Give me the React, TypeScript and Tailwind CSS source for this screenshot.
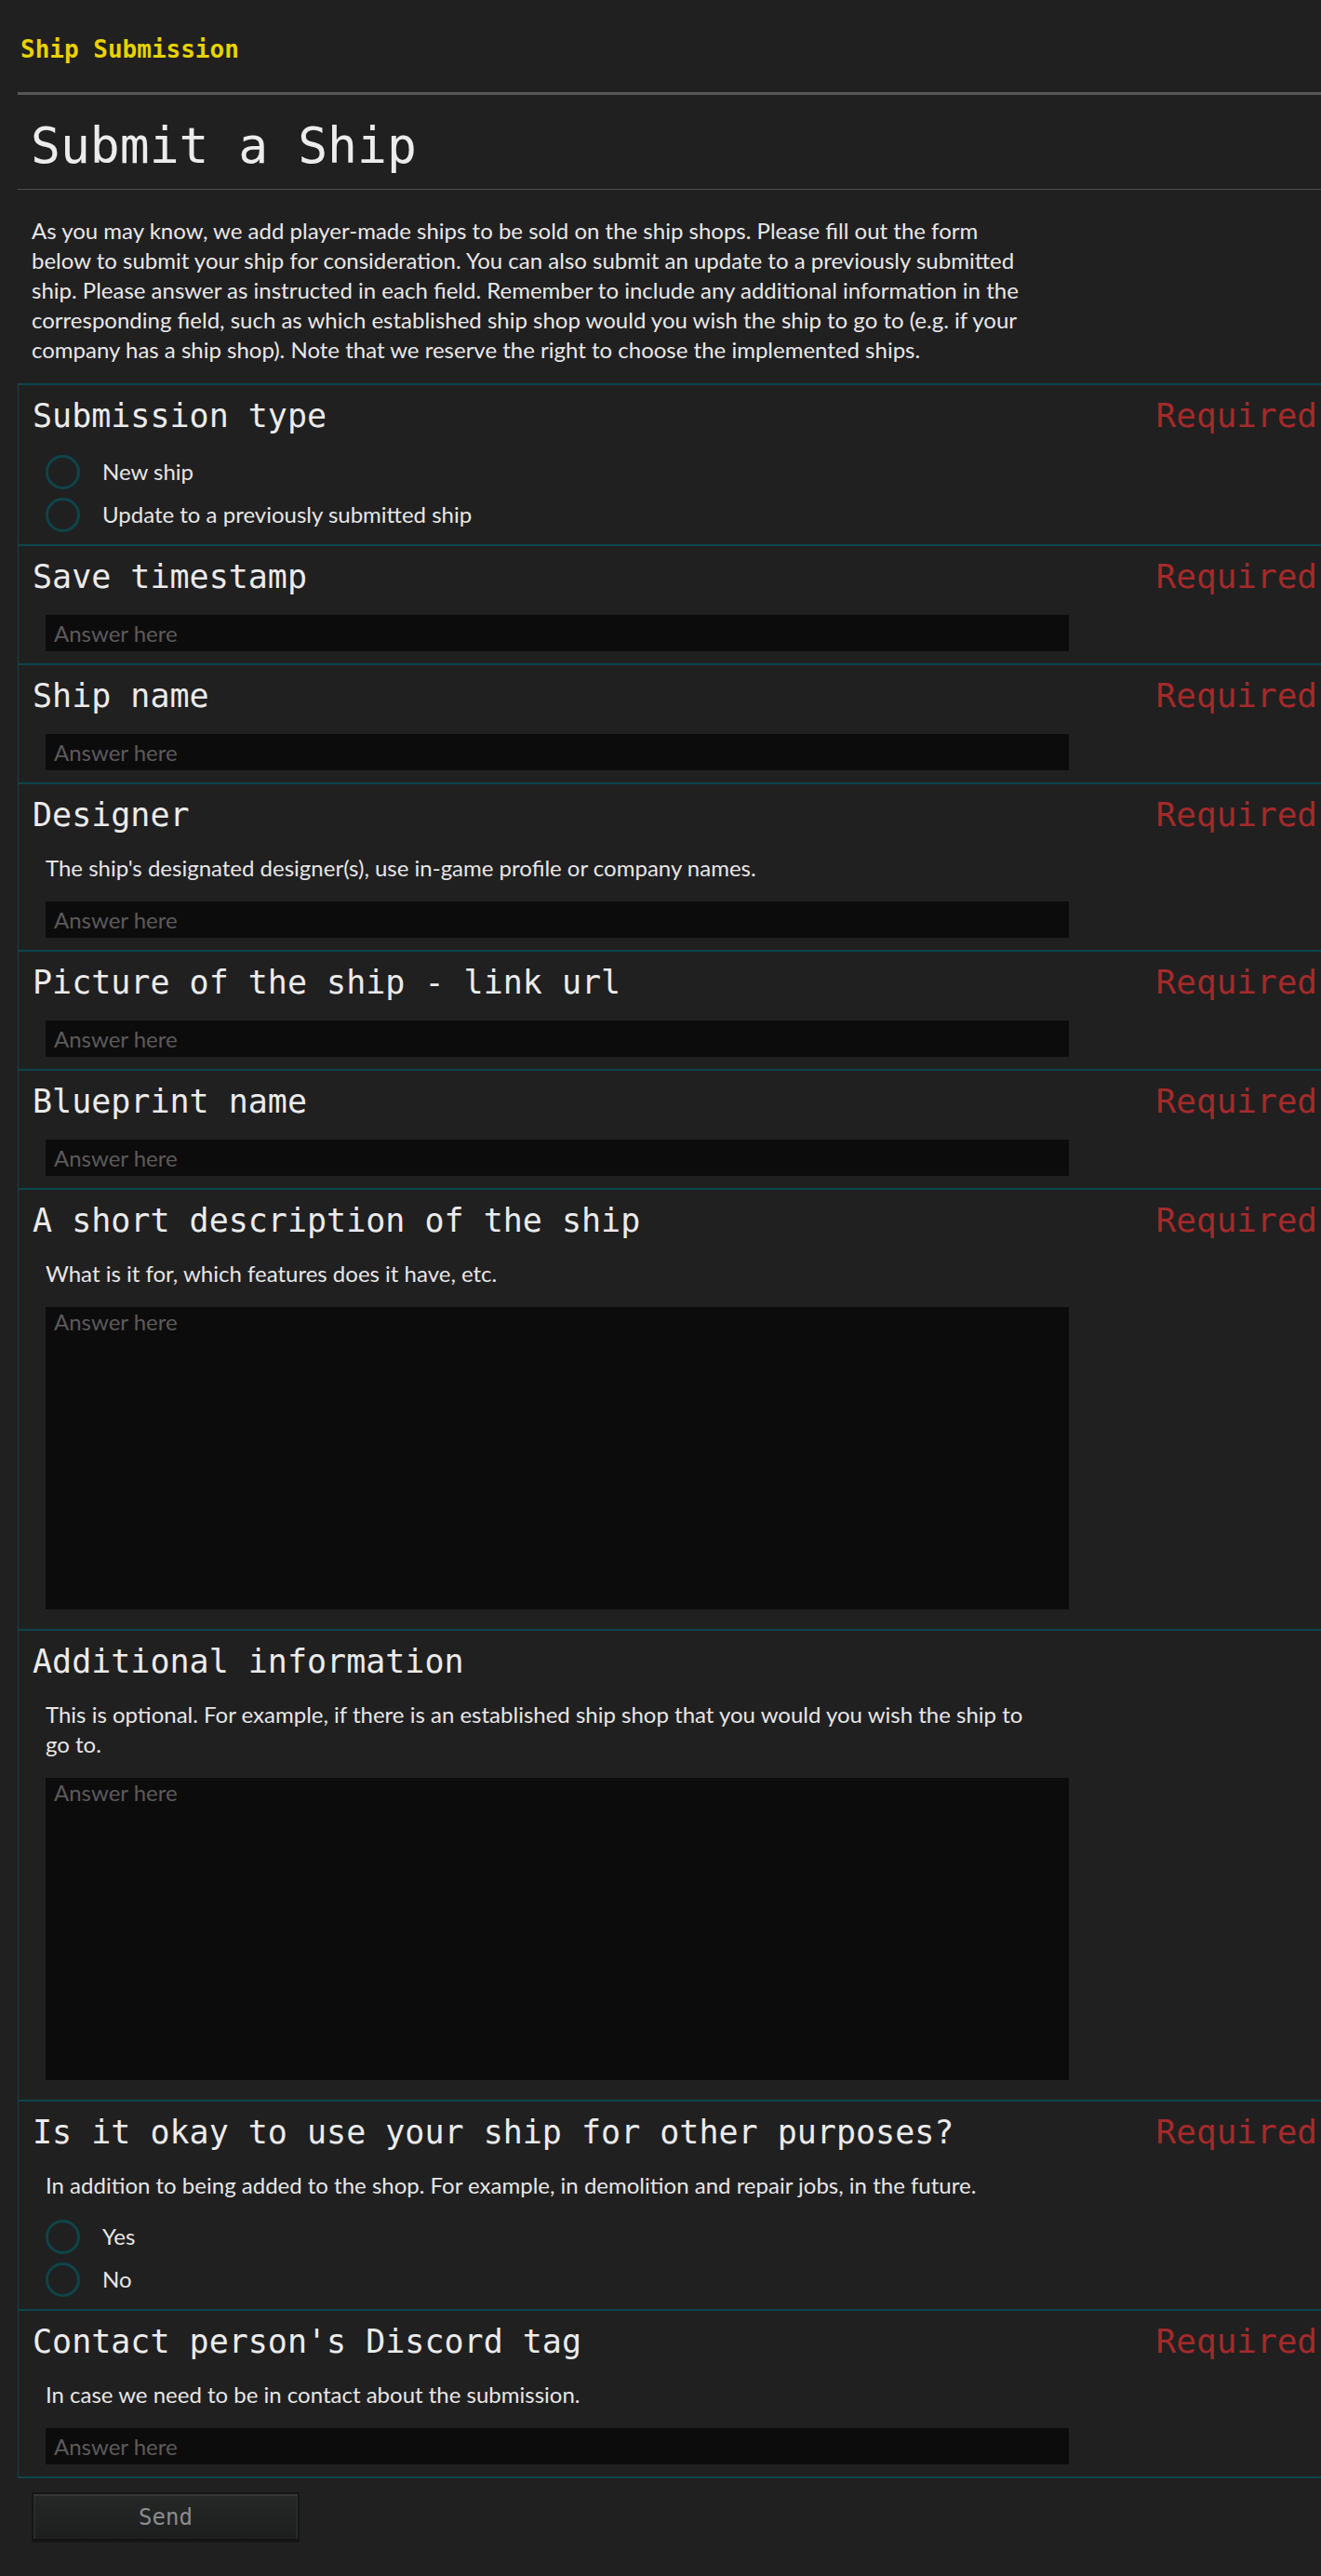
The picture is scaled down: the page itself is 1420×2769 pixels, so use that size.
import React from 'react'

type Field = {
  title: string
  required: boolean
  desc?: string
  kind: 'input' | 'textarea' | 'radio'
  options?: string[]
}

const fields: Field[] = [
  { title: 'Submission type', required: true, kind: 'radio', options: ['New ship', 'Update to a previously submitted ship'] },
  { title: 'Save timestamp', required: true, kind: 'input' },
  { title: 'Ship name', required: true, kind: 'input' },
  { title: 'Designer', required: true, kind: 'input', desc: "The ship's designated designer(s), use in-game profile or company names." },
  { title: 'Picture of the ship - link url', required: true, kind: 'input' },
  { title: 'Blueprint name', required: true, kind: 'input' },
  { title: 'A short description of the ship', required: true, kind: 'textarea', desc: 'What is it for, which features does it have, etc.' },
  {
    title: 'Additional information',
    required: false,
    kind: 'textarea',
    desc: 'This is optional. For example, if there is an established ship shop that you would you wish the ship to go to.'
  },
  {
    title: 'Is it okay to use your ship for other purposes?',
    required: true,
    kind: 'radio',
    options: ['Yes', 'No'],
    desc: 'In addition to being added to the shop. For example, in demolition and repair jobs, in the future.'
  },
  { title: "Contact person's Discord tag", required: true, kind: 'input', desc: 'In case we need to be in contact about the submission.' }
]

function FieldBlock({ field, last }: { field: Field; last: boolean }) {
  return (
    <div
      className={`border-t-2 border-[#0b464b] pt-3 ${last ? 'border-b-2' : ''} ${field.kind === 'textarea' ? 'pb-[21px]' : 'pb-[13px]'}`}
    >
      {/* Header row */}
      <div className="flex justify-between items-start pl-[15px] pr-[4px]">
        <span className="font-['DejaVu_Sans_Mono',monospace] text-[35px] leading-[42px] text-[#ebebeb]">{field.title}</span>
        {field.required && (
          <span className="font-['DejaVu_Sans_Mono',monospace] text-[36px] leading-[42px] text-[#a52a2a]">Required</span>
        )}
      </div>

      <div className="pl-[29px] flex flex-col gap-5 mt-5">
        {field.desc && <p className="max-w-[1068px] text-[24px] leading-[32px] text-[#e6e6e6]">{field.desc}</p>}

        {field.kind === 'input' && (
          <input
            type="text"
            placeholder="Answer here"
            className="block w-[1100px] h-[39px] bg-[#0d0c0d] px-[9px] text-[24px] text-[#e6e6e6] placeholder-[#5b5a5b] outline-none"
          />
        )}

        {field.kind === 'textarea' && (
          <textarea
            placeholder="Answer here"
            className="block w-[1100px] h-[325px] bg-[#0d0c0d] px-[9px] pt-[2px] text-[24px] leading-[28px] text-[#e6e6e6] placeholder-[#5b5a5b] outline-none resize-none"
          />
        )}

        {field.kind === 'radio' && (
          <div className="flex flex-col gap-2">
            {field.options?.map((opt) => (
              <label key={opt} className="flex items-center h-[38px] gap-6 cursor-pointer">
                <span className="w-[37px] h-[37px] rounded-full border-[3px] border-[#0c4549] shrink-0" />
                <span className="text-[24px] text-[#e6e6e6]">{opt}</span>
              </label>
            ))}
          </div>
        )}
      </div>
    </div>
  )
}

export default function App() {
  return (
    <div className="min-h-screen bg-[#212021] font-['Lato','Noto_Sans',sans-serif] pb-[38px]">
      {/* Top nav */}
      <div className="h-[99px] pt-[36px] pl-[22px]">
        <span className="font-['DejaVu_Sans_Mono',monospace] font-bold text-[26px] leading-[34px] text-[#e8d200]">
          Ship Submission
        </span>
      </div>

      <div className="ml-[19px]">
        <div className="border-t-[3px] border-[#565656]">
          <h1 className="pl-[14px] pt-[25px] pb-[16px] font-['DejaVu_Sans_Mono',monospace] text-[53px] leading-[60px] text-[#ececec]">
            Submit a Ship
          </h1>
        </div>
        <div className="border-t border-[#4d4d4d]" />

        <p className="mt-[28px] mb-[20px] pl-[15px] max-w-[1160px] text-[24px] leading-[32px] text-[#e8e8e8]">
          As you may know, we add player-made ships to be sold on the ship shops. Please fill out the form
          <br />
          below to submit your ship for consideration. You can also submit an update to a previously submitted
          <br />
          ship. Please answer as instructed in each field. Remember to include any additional information in the
          <br />
          corresponding field, such as which established ship shop would you wish the ship to go to (e.g. if your
          <br />
          company has a ship shop). Note that we reserve the right to choose the implemented ships.
        </p>

        {/* Form fields */}
        <form className="border-l border-[#0b464b]" onSubmit={(e) => e.preventDefault()}>
          {fields.map((f, i) => (
            <FieldBlock key={f.title} field={f} last={i === fields.length - 1} />
          ))}
        </form>

        <button
          type="button"
          className="mt-[15px] ml-[15px] w-[288px] h-[54px] border-2 border-[#161616] bg-gradient-to-b from-[#262727] to-[#1c1e1e] shadow-[inset_0_2px_0_#363636,inset_0_-2px_0_#131313,inset_2px_0_0_#2a2a2a,inset_-2px_0_0_#2a2a2a] font-['DejaVu_Sans_Mono',monospace] text-[24px] text-[#8c8c8c]"
        >
          Send
        </button>
      </div>
    </div>
  )
}
